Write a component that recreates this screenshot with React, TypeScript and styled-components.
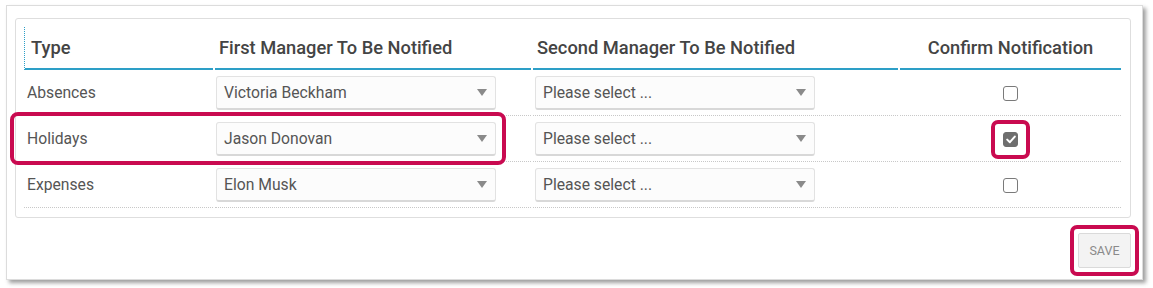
import React from "react";
import styled, { createGlobalStyle } from "styled-components";

const Global = createGlobalStyle`
  html, body { margin: 0; padding: 0; background: #ffffff; }
  body { font-family: "Roboto", "Liberation Sans", sans-serif; }
`;

const Page = styled.div`
  padding: 5px 10px 9px 6px;
`;

const Card = styled.div`
  position: relative;
  background: #fff;
  border: 1px solid #dcdcdc;
  box-shadow: 3px 3px 4px rgba(0, 0, 0, 0.38);
  padding: 12px 11px 11px 8px;
`;

const Panel = styled.div`
  border: 1px solid #dedede;
  border-radius: 3px;
  padding: 8px 7px 9px 6px;
`;

const Table = styled.table`
  width: 100%;
  table-layout: fixed;
  border-collapse: separate;
  border-spacing: 2px 0;
`;

const Th = styled.th<{ $align?: string; $first?: boolean }>`
  height: 41px;
  padding: 0 4px 0 ${(p) => (p.$first ? "6px" : "4px")};
  text-align: ${(p) => p.$align || "left"};
  font-size: 18.3px;
  font-weight: 500;
  color: #444;
  border-bottom: 2px solid #2d9fc7;
  border-left: ${(p) => (p.$first ? "1px dotted #2d9fc7" : "none")};
  white-space: nowrap;
`;

const Td = styled.td<{ $align?: string; $pad?: string }>`
  height: 45px;
  padding: 0 ${(p) => p.$pad || "3px"};
  text-align: ${(p) => p.$align || "left"};
  font-size: 15.7px;
  color: #555;
  border-bottom: 1px dotted #c8c8c8;
  vertical-align: middle;
`;

const Select = styled.div`
  box-sizing: border-box;
  width: 280px;
  height: 34px;
  display: flex;
  align-items: center;
  justify-content: space-between;
  padding: 0 8px 0 7px;
  background: #fcfcfc;
  border: 1px solid #e2e2e2;
  border-bottom: 2px solid #d8d8d8;
  border-radius: 3px;
  font-size: 15.7px;
  color: #555;
`;

const Caret = styled.span`
  width: 0;
  height: 0;
  border-left: 5px solid transparent;
  border-right: 5px solid transparent;
  border-top: 7px solid #8a8a8a;
`;

const Check = styled.span<{ $checked?: boolean }>`
  box-sizing: border-box;
  display: inline-flex;
  align-items: center;
  justify-content: center;
  width: 15px;
  height: 15px;
  border-radius: 3px;
  border: 1.5px solid ${(p) => (p.$checked ? "#6e6e6e" : "#7a7a7a")};
  background: ${(p) => (p.$checked ? "#6e6e6e" : "#fff")};
  vertical-align: middle;
`;

const Marked = styled.span<{ $inset: string }>`
  position: relative;
  display: inline-flex;
  &::after {
    content: "";
    position: absolute;
    inset: ${(p) => p.$inset};
    border: 4px solid #c90a50;
    border-radius: 7px;
    pointer-events: none;
  }
`;

const RowRing = styled.div`
  position: absolute;
  left: 3px;
  top: 106px;
  width: 496px;
  height: 53px;
  box-sizing: border-box;
  border: 4px solid #c90a50;
  border-radius: 8px;
  pointer-events: none;
`;

const Footer = styled.div`
  display: flex;
  justify-content: flex-end;
  margin-top: 15px;
`;

const SaveButton = styled.button`
  width: 53px;
  height: 35px;
  background: #f3f3f3;
  border: 1px solid #dadada;
  border-radius: 2px;
  font-family: "Roboto", "Liberation Sans", sans-serif;
  font-size: 12.5px;
  color: #8a8a8a;
  padding: 0;
`;

const rows = [
  { type: "Absences", first: "Victoria Beckham", checked: false },
  { type: "Holidays", first: "Jason Donovan", checked: true },
  { type: "Expenses", first: "Elon Musk", checked: false },
];

const Tick = () => (
  <svg width="10" height="9" viewBox="0 0 10 9">
    <path d="M1.2 4.6 L3.9 7.2 L8.8 1.6" fill="none" stroke="#fff" strokeWidth="2" strokeLinecap="round" strokeLinejoin="round" />
  </svg>
);

export default function App() {
  return (
    <>
      <Global />
      <Page>
        <Card>
          <Panel>
            <Table>
              <colgroup>
                <col style={{ width: 189 }} />
                <col style={{ width: 316 }} />
                <col style={{ width: 365 }} />
                <col />
              </colgroup>
              <thead>
                <tr>
                  <Th $first>Type</Th>
                  <Th>First Manager To Be Notified</Th>
                  <Th>Second Manager To Be Notified</Th>
                  <Th $align="center">Confirm Notification</Th>
                </tr>
              </thead>
              <tbody>
                {rows.map((r) => (
                  <tr key={r.type}>
                    <Td>{r.type}</Td>
                    <Td $pad="1px">
                      <Select>
                        <span>{r.first}</span>
                        <Caret />
                      </Select>
                    </Td>
                    <Td $pad="2px">
                      <Select>
                        <span>Please select ...</span>
                        <Caret />
                      </Select>
                    </Td>
                    <Td $align="center">
                      {r.checked ? (
                        <Marked $inset="-12px">
                          <Check $checked>
                            <Tick />
                          </Check>
                        </Marked>
                      ) : (
                        <Check />
                      )}
                    </Td>
                  </tr>
                ))}
              </tbody>
            </Table>
          </Panel>
          <Footer>
            <Marked $inset="-8px">
              <SaveButton>SAVE</SaveButton>
            </Marked>
          </Footer>
          <RowRing />
        </Card>
      </Page>
    </>
  );
}
